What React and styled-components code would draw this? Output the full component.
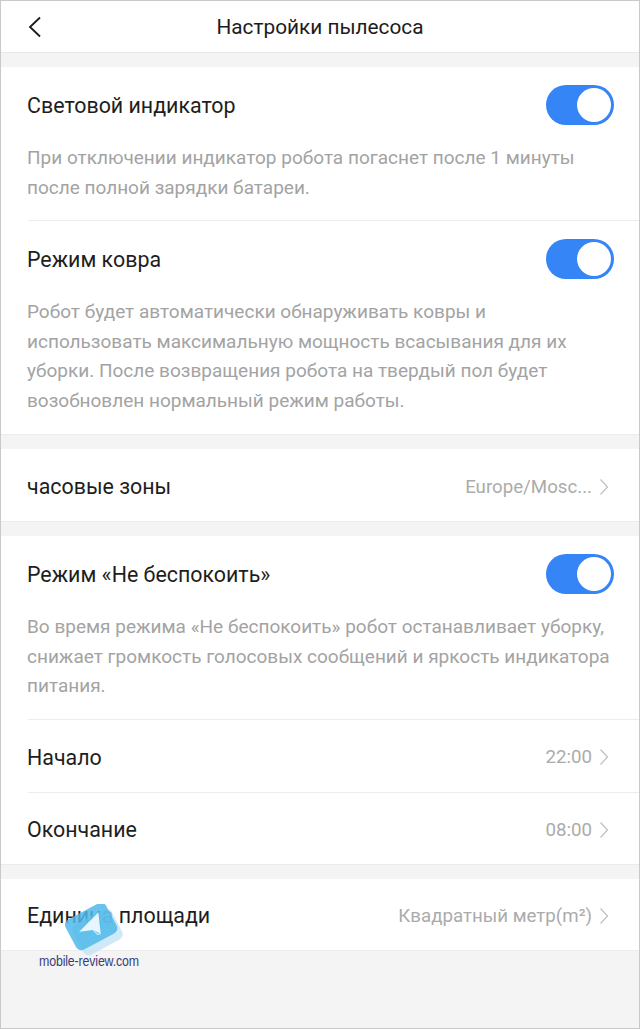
import React from "react";
import styled, { createGlobalStyle } from "styled-components";

const Global = createGlobalStyle`
  html, body { margin: 0; padding: 0; background: #fff; }
  * { box-sizing: border-box; }
`;

const Frame = styled.div`
  position: relative;
  width: 640px;
  height: 1029px;
  border: 1px solid #c9c9c9;
  background: #f4f4f4;
  overflow: hidden;
  font-family: Roboto, "Noto Sans", sans-serif;
`;

const Header = styled.header`
  height: 52px;
  background: #fff;
  border-bottom: 1px solid #e8e8e8;
  display: grid;
  grid-template-columns: 60px 1fr 60px;
  align-items: center;
`;

const Back = styled.button`
  border: 0;
  background: none;
  padding: 0 0 0 26px;
  height: 100%;
  display: flex;
  align-items: center;
`;

const Title = styled.h1`
  margin: 0;
  text-align: center;
  font-size: 20.8px;
  font-weight: 400;
  color: #1c1c1c;
`;

const Section = styled.section`
  margin-top: 14px;
  background: #fff;
  border-bottom: 1px solid #ececec;
`;

const Row = styled.div`
  height: ${(p) => p.$h || 71}px;
  padding: 3px 30px 0 26px;
  display: flex;
  align-items: center;
  justify-content: space-between;
`;

const ToggleRowBox = styled(Row)`
  padding-top: 0;
  padding-right: 25px;
`;

const Label = styled.span`
  font-size: 21.4px;
  color: #1e1e1e;
`;

const Desc = styled.p`
  margin: 0;
  padding: 0 20px ${(p) => p.$pb || 18}px 26px;
  font-size: 19px;
  line-height: 29.5px;
  color: #a3a3a3;
  white-space: nowrap;
`;

const Divider = styled.div`
  height: 1px;
  margin-left: 27px;
  background: #ececec;
`;

const Value = styled.span`
  display: flex;
  align-items: center;
  gap: 7px;
  font-size: 18.7px;
  color: #ababab;
`;

const Toggle = styled.div`
  width: 68px;
  height: 40px;
  border-radius: 20px;
  background: #3585f6;
  display: flex;
  align-items: center;
  justify-content: flex-end;
  padding-right: 3px;
  flex: none;
`;

const Knob = styled.div`
  width: 34px;
  height: 34px;
  border-radius: 50%;
  background: #fff;
`;

const Watermark = styled.div`
  position: absolute;
  left: 37px;
  top: 903px;
  width: 110px;
  height: 72px;
  pointer-events: none;
`;

const WmText = styled.span`
  position: absolute;
  left: 1px;
  top: 48px;
  font-family: "Liberation Sans", sans-serif;
  font-size: 15.5px;
  letter-spacing: -0.2px;
  color: #3c3c7c;
  white-space: nowrap;
  transform: scaleX(0.8);
  transform-origin: left center;
`;

const Chevron = () => (
  <svg width="10" height="18" viewBox="0 0 10 18">
    <path d="M1.5 1.5 L8.5 9 L1.5 16.5" fill="none" stroke="#c2c2c2" strokeWidth="1.3" />
  </svg>
);

const Switch = () => (
  <Toggle>
    <Knob />
  </Toggle>
);

export default function App() {
  return (
    <>
      <Global />
      <Frame>
        <Header>
          <Back aria-label="back">
            <svg width="16" height="22" viewBox="0 0 16 22">
              <path d="M13 1.5 L3 11 L13 20.5" fill="none" stroke="#1a1a1a" strokeWidth="1.8" />
            </svg>
          </Back>
          <Title>Настройки пылесоса</Title>
          <span />
        </Header>

        <Section>
          <ToggleRowBox $h={76}>
            <Label>Световой индикатор</Label>
            <Switch />
          </ToggleRowBox>
          <Desc>
            При отключении индикатор робота погаснет после 1 минуты
            <br />
            после полной зарядки батареи.
          </Desc>
          <Divider />
          <ToggleRowBox $h={76}>
            <Label>Режим ковра</Label>
            <Switch />
          </ToggleRowBox>
          <Desc $pb={19}>
            Робот будет автоматически обнаруживать ковры и
            <br />
            использовать максимальную мощность всасывания для их
            <br />
            уборки. После возвращения робота на твердый пол будет
            <br />
            возобновлен нормальный режим работы.
          </Desc>
        </Section>

        <Section>
          <Row $h={72}>
            <Label>часовые зоны</Label>
            <Value>
              Europe/Mosc... <Chevron />
            </Value>
          </Row>
        </Section>

        <Section>
          <ToggleRowBox $h={76}>
            <Label>Режим «Не беспокоить»</Label>
            <Switch />
          </ToggleRowBox>
          <Desc>
            Во время режима «Не беспокоить» робот останавливает уборку,
            <br />
            снижает громкость голосовых сообщений и яркость индикатора
            <br />
            питания.
          </Desc>
          <Divider />
          <Row $h={72}>
            <Label>Начало</Label>
            <Value>
              22:00 <Chevron />
            </Value>
          </Row>
          <Divider />
          <Row>
            <Label>Окончание</Label>
            <Value>
              08:00 <Chevron />
            </Value>
          </Row>
        </Section>

        <Section>
          <Row>
            <Label>Единица площади</Label>
            <Value>
              Квадратный метр(m²) <Chevron />
            </Value>
          </Row>
        </Section>

        <Watermark>
          <svg width="110" height="55" viewBox="0 0 110 55">
            <g transform="rotate(-28 55 26)">
              <rect x="36" y="13" width="44" height="34" rx="6" fill="#bfe2f6" opacity="0.75" />
              <rect x="32" y="5" width="46" height="34" rx="6" fill="#4fb8ea" opacity="0.85" />
              <path d="M42 21 L68 13 L60 33 L55 26 Z" fill="#ffffff" opacity="0.85" />
              <path d="M55 26 L57 32 L60 33" fill="none" stroke="#d5eef9" strokeWidth="1" />
            </g>
          </svg>
          <WmText>mobile-review.com</WmText>
        </Watermark>
      </Frame>
    </>
  );
}
